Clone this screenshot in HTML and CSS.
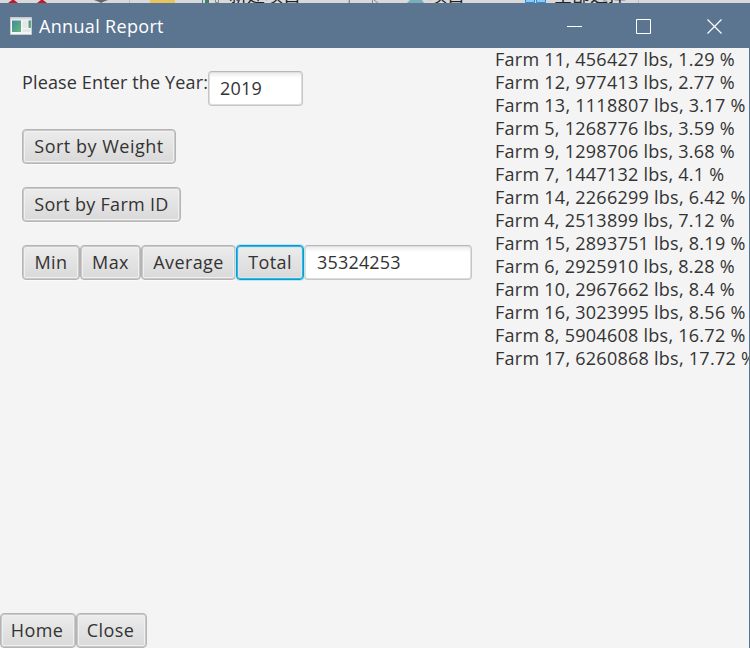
FILE: index.html
```html
<!DOCTYPE html>
<html lang="en">
<head>
<meta charset="utf-8">
<title>Annual Report</title>
<link rel="stylesheet" href="styles.css">
</head>
<body>
<div class="backdrop">
  <svg width="750" height="3" viewBox="0 0 750 3">
    <path d="M8 3 12 0h2l4 3zM37 3 41 0h2l4 3z" fill="#c41824"/>
    <path d="M94 0h14l-4 1.5-3 1.5-3-1.5z" fill="#666"/>
    <path d="M129.500 0v3M348.500 0v3M638.500 0v3" stroke="#bcbcbc"/>
    <path d="M150 0h25v3h-25z" fill="#e9c35c"/>
    <path d="M202.500 0v3" stroke="#3589b5"/>
    <path d="M205 0h4v3h-4z" fill="#487b57"/>
    <path d="M215.500 0v2.500h3V0M349.500 0v3M372.500 0v3M374 0l4 3" stroke="#888" fill="none"/>
    <path d="M407 3l3-3h12l2 3z" fill="#78aeb8"/>
    <path d="M525.500 0v2.500h9V0M536.500 0v2.500h9V0" fill="#91c9f5" stroke="#298dde"/>
  </svg>
  <span class="tool tool-new">新建项目</span>
  <span class="tool tool-history">项目</span>
  <span class="tool tool-select">全部选择</span>
</div>
<main class="window">
  <header class="titlebar">
    <svg class="app-icon" width="22" height="18" viewBox="0 0 22 18">
      <defs><linearGradient id="pane" x1="0" y1="0" x2="1" y2="1"><stop stop-color="#4389a0"/><stop offset="1" stop-color="#66b878"/></linearGradient></defs>
      <path d="M.5.500h21v17H.5z" fill="#f4f5f5" stroke="#c6cbd0"/>
      <path d="M1 1h20v1.500H1z" fill="#d5dade"/>
      <path d="M2 3.500h9V15H2z" fill="url(#pane)"/>
      <path d="M12.500 3.500h5V11h-5zM12.500 12h8v3h-8z" fill="#e5e6e6"/>
      <path d="M18.500 3.500H21V11h-2.500z" fill="url(#pane)"/>
    </svg>
    <h1>Annual Report</h1>
    <svg class="controls" width="156" height="16" viewBox="0 0 156 16" fill="none" stroke="#fff">
      <path d="M0 8.500h15M69.500 1.500h14v14h-14z"/>
      <path d="M140.500 1.500l14 14M154.500 1.500l-14 14" stroke-width="1.200"/>
    </svg>
  </header>
  <div class="content">
    <section class="form">
      <div class="row year-row">
        <label for="year">Please Enter the Year:</label>
        <input id="year" class="field year" value="2019">
      </div>
      <div class="row"><button class="w154">Sort by Weight</button></div>
      <div class="row"><button class="w159">Sort by Farm ID</button></div>
      <div class="row">
        <button class="w58">Min</button><button class="w61">Max</button><button class="w95">Average</button><button class="w68 focused">Total</button><input class="field result" aria-label="Result" value="35324253">
      </div>
    </section>
    <ul class="report">
      <li>Farm 11, 456427 lbs, 1.29 %</li>
      <li>Farm 12, 977413 lbs, 2.77 %</li>
      <li>Farm 13, 1118807 lbs, 3.17 %</li>
      <li>Farm 5, 1268776 lbs, 3.59 %</li>
      <li>Farm 9, 1298706 lbs, 3.68 %</li>
      <li>Farm 7, 1447132 lbs, 4.1 %</li>
      <li>Farm 14, 2266299 lbs, 6.42 %</li>
      <li>Farm 4, 2513899 lbs, 7.12 %</li>
      <li>Farm 15, 2893751 lbs, 8.19 %</li>
      <li>Farm 6, 2925910 lbs, 8.28 %</li>
      <li>Farm 10, 2967662 lbs, 8.4 %</li>
      <li>Farm 16, 3023995 lbs, 8.56 %</li>
      <li>Farm 8, 5904608 lbs, 16.72 %</li>
      <li>Farm 17, 6260868 lbs, 17.72 %</li>
    </ul>
  </div>
  <footer><button class="w76">Home</button><button class="w71">Close</button></footer>
</main>
</body>
</html>
```
FILE: styles.css
```css
* { box-sizing: border-box; }
body {
  margin: 0;
  height: 648px;
  overflow: hidden;
  display: flex;
  flex-direction: column;
  color: #333;
  font-family: "Open Sans", "Noto Sans CJK SC", sans-serif;
  font-size: 18px;
}
.backdrop { position: relative; height: 3px; overflow: hidden; background: #d9d9d9; }
.backdrop svg { display: block; }
.tool { position: absolute; top: -15px; font: 18px/18px "Noto Sans CJK SC", sans-serif; color: #222; }
.tool-new { left: 229px; }
.tool-history { left: 429px; }
.tool-select { left: 554px; }
.window { flex: 1; display: flex; flex-direction: column; border-right: 1px solid #5b7591; background: #f4f4f4; overflow: hidden; }
.titlebar { flex: none; height: 45px; display: flex; align-items: center; padding: 0 26px 0 10px; background: #5b7591; color: #fff; }
.app-icon { margin-right: 7px; }
h1 { flex: 1; margin: 0; font-size: 18px; font-weight: 400; line-height: 24px; letter-spacing: .33px; }
.content { flex: 1; display: flex; }
.form { width: 495px; padding: 23px 0 0 22px; display: flex; flex-direction: column; gap: 23px; }
.row { display: flex; height: 35px; }
label { width: 186px; line-height: 23px; white-space: nowrap; letter-spacing: .14px; }
button, .field { font: inherit; color: #333; height: 35px; border-radius: 4px; }
button {
  flex: none;
  padding: 0;
  line-height: 33px;
  letter-spacing: .4px;
  white-space: nowrap;
  border: 1px solid #b5b5b5;
  background: linear-gradient(#ececec, #d9d9d9);
  box-shadow: inset 0 0 0 1px #c9c9c9, inset 0 0 0 2px #f0f0f0, 0 1px 0 #fafafa;
}
.focused { border-color: #039ed3; box-shadow: 0 0 0 1px #c0e4f0, inset 0 0 0 1px #39b3dc, inset 0 0 0 2px #d6e8ee; z-index: 1; }
.field { border: 1px solid #c6c6c6; border-top-color: #b8b8b8; padding: 0 11px 1px; background: linear-gradient(#eaeaea, #fff 6px); box-shadow: inset 0 0 0 1px #dedede; outline: 0; letter-spacing: .18px; }
.year { width: 95px; }
.result { width: 168px; padding-left: 12px; }
.w154 { width: 154px; letter-spacing: .5px; }
.w159 { width: 159px; letter-spacing: .3px; }
.w58 { width: 58px; }
.w61 { width: 61px; }
.w95 { width: 95px; }
.w68 { width: 68px; }
.w76 { width: 76px; }
.w71 { width: 71px; }
.w76, .w71 { padding-right: 2px; }
.report { width: 254px; overflow: hidden; margin: 0; padding: 0; list-style: none; line-height: 23px; letter-spacing: .26px; white-space: nowrap; }
footer { flex: none; display: flex; height: 35px; }
```
